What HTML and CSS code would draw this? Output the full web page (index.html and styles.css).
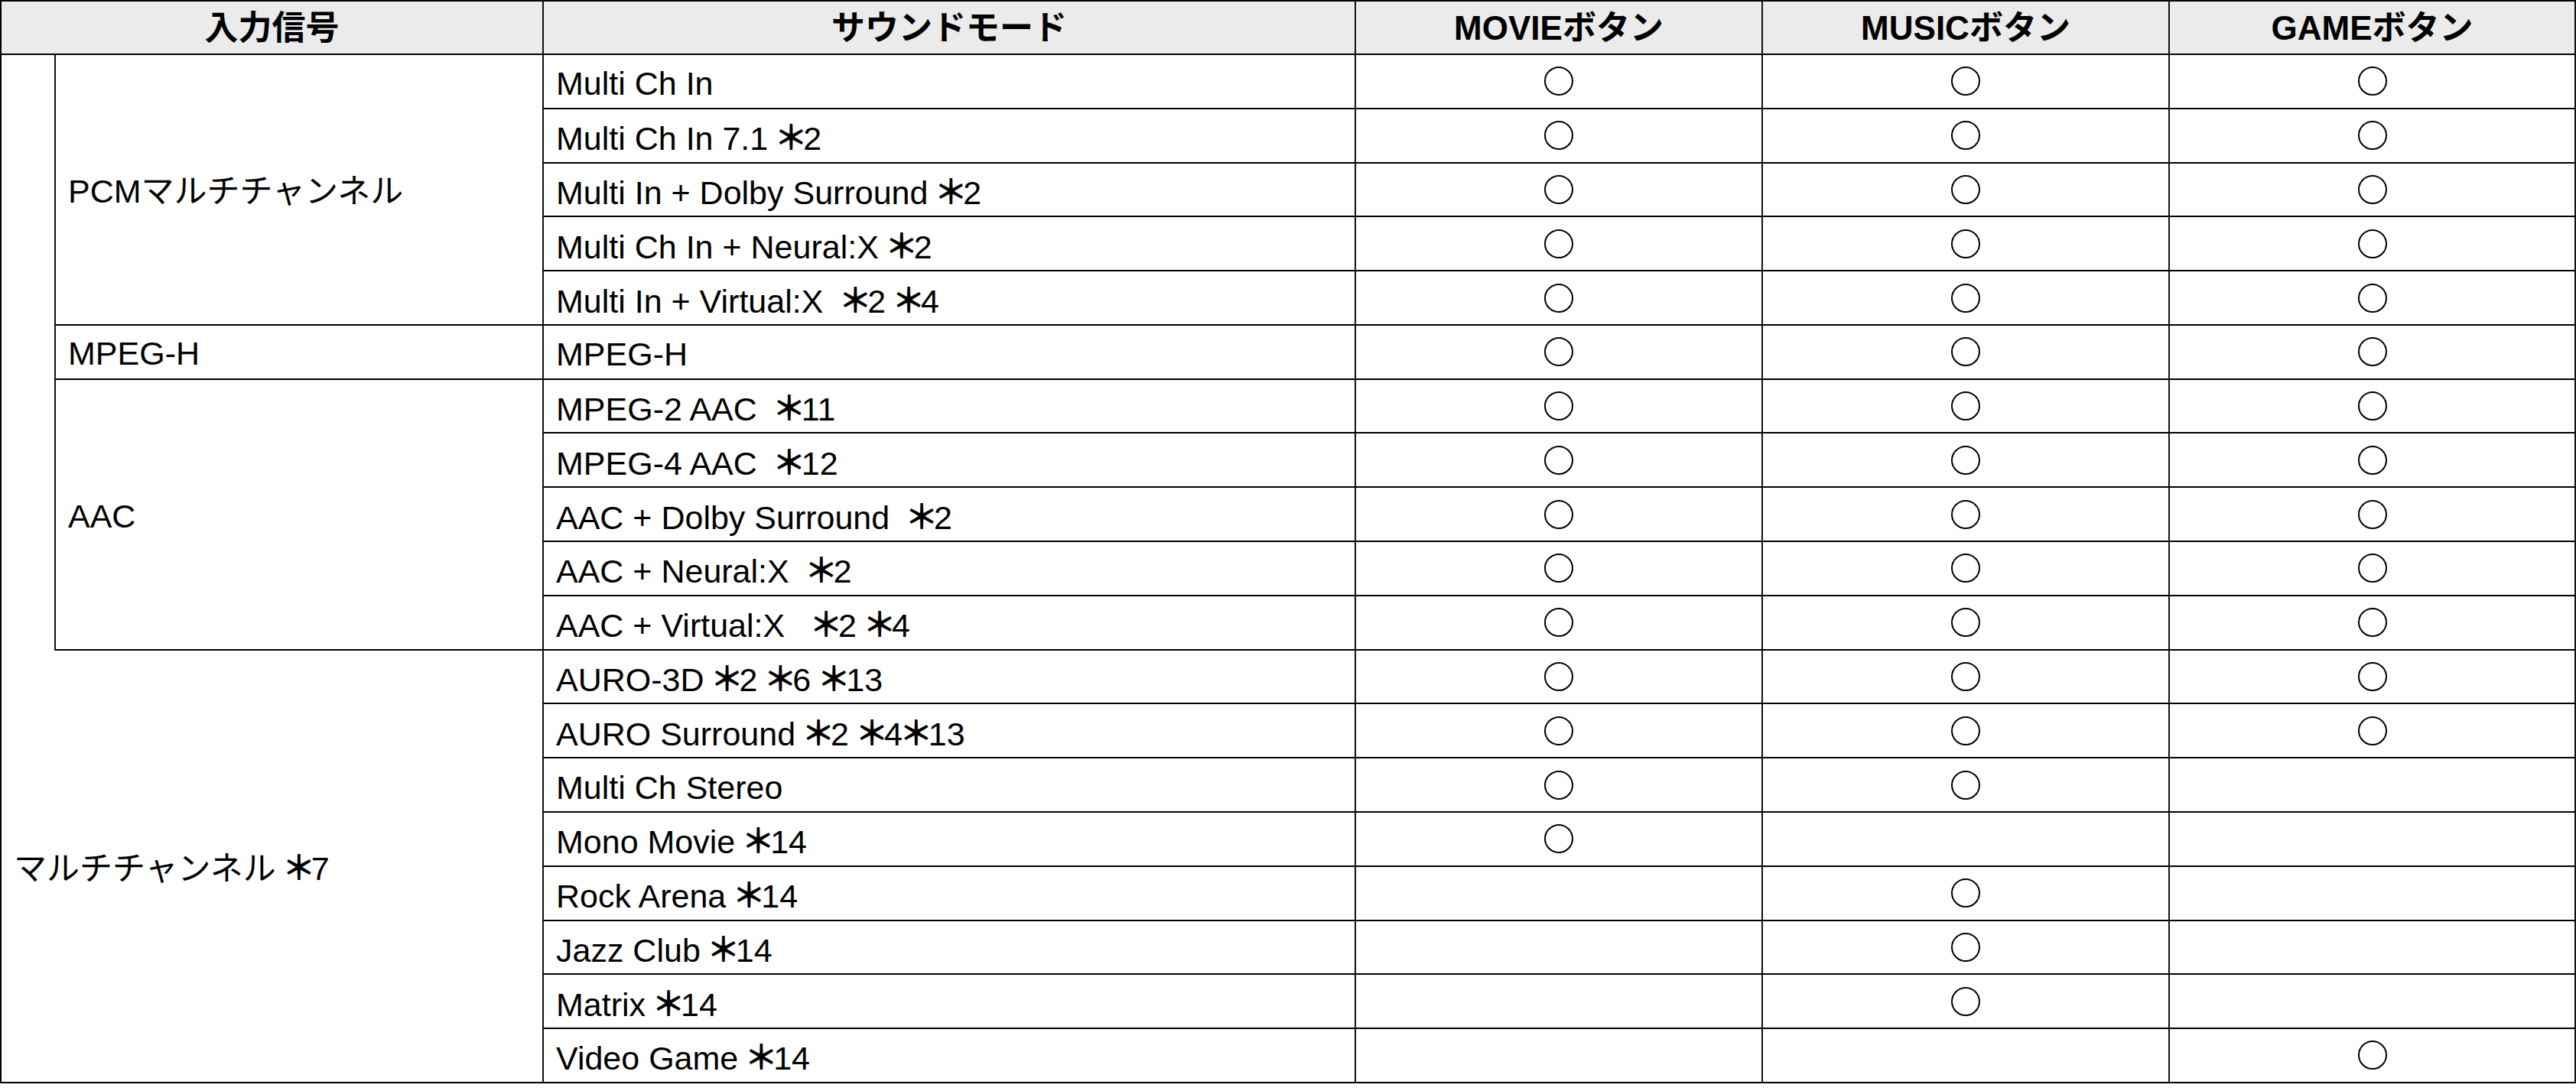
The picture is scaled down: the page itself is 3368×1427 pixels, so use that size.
FILE: index.html
```html
<!DOCTYPE html>
<html lang="ja">
<head>
<meta charset="utf-8">
<title>サウンドモード</title>
<link rel="stylesheet" href="styles.css">
</head>
<body>
<div class="tbl">
  <div class="c h hspan"><span>入力信号</span></div>
  <div class="c h"><span>サウンドモード</span></div>
  <div class="c h"><span>MOVIEボタン</span></div>
  <div class="c h"><span>MUSICボタン</span></div>
  <div class="c h"><span>GAMEボタン</span></div>

  <div class="c rail"></div>
  <div class="c grp grp5"><span>PCMマルチチャンネル</span></div>
  <div class="c mode"><span>Multi Ch In</span></div>
  <div class="c mk"><span class="o"></span></div>
  <div class="c mk"><span class="o"></span></div>
  <div class="c mk"><span class="o"></span></div>

  <div class="c mode"><span>Multi Ch In 7.1 <span class="ast">＊</span>2</span></div>
  <div class="c mk"><span class="o"></span></div>
  <div class="c mk"><span class="o"></span></div>
  <div class="c mk"><span class="o"></span></div>

  <div class="c mode"><span>Multi In + Dolby Surround <span class="ast">＊</span>2</span></div>
  <div class="c mk"><span class="o"></span></div>
  <div class="c mk"><span class="o"></span></div>
  <div class="c mk"><span class="o"></span></div>

  <div class="c mode"><span>Multi Ch In + Neural:X <span class="ast">＊</span>2</span></div>
  <div class="c mk"><span class="o"></span></div>
  <div class="c mk"><span class="o"></span></div>
  <div class="c mk"><span class="o"></span></div>

  <div class="c mode"><span>Multi In + Virtual:X&nbsp; <span class="ast">＊</span>2 <span class="ast">＊</span>4</span></div>
  <div class="c mk"><span class="o"></span></div>
  <div class="c mk"><span class="o"></span></div>
  <div class="c mk"><span class="o"></span></div>

  <div class="c grp"><span>MPEG-H</span></div>
  <div class="c mode"><span>MPEG-H</span></div>
  <div class="c mk"><span class="o"></span></div>
  <div class="c mk"><span class="o"></span></div>
  <div class="c mk"><span class="o"></span></div>

  <div class="c grp grp5"><span>AAC</span></div>
  <div class="c mode"><span>MPEG-2 AAC&nbsp; <span class="ast">＊</span>11</span></div>
  <div class="c mk"><span class="o"></span></div>
  <div class="c mk"><span class="o"></span></div>
  <div class="c mk"><span class="o"></span></div>

  <div class="c mode"><span>MPEG-4 AAC&nbsp; <span class="ast">＊</span>12</span></div>
  <div class="c mk"><span class="o"></span></div>
  <div class="c mk"><span class="o"></span></div>
  <div class="c mk"><span class="o"></span></div>

  <div class="c mode"><span>AAC + Dolby Surround&nbsp; <span class="ast">＊</span>2</span></div>
  <div class="c mk"><span class="o"></span></div>
  <div class="c mk"><span class="o"></span></div>
  <div class="c mk"><span class="o"></span></div>

  <div class="c mode"><span>AAC + Neural:X&nbsp; <span class="ast">＊</span>2</span></div>
  <div class="c mk"><span class="o"></span></div>
  <div class="c mk"><span class="o"></span></div>
  <div class="c mk"><span class="o"></span></div>

  <div class="c mode"><span>AAC + Virtual:X&nbsp;&nbsp; <span class="ast">＊</span>2 <span class="ast">＊</span>4</span></div>
  <div class="c mk"><span class="o"></span></div>
  <div class="c mk"><span class="o"></span></div>
  <div class="c mk"><span class="o"></span></div>

  <div class="c grp big"><span>マルチチャンネル <span class="ast">＊</span>7</span></div>
  <div class="c mode"><span>AURO-3D <span class="ast">＊</span>2 <span class="ast">＊</span>6 <span class="ast">＊</span>13</span></div>
  <div class="c mk"><span class="o"></span></div>
  <div class="c mk"><span class="o"></span></div>
  <div class="c mk"><span class="o"></span></div>

  <div class="c mode"><span>AURO Surround <span class="ast">＊</span>2 <span class="ast">＊</span>4<span class="ast">＊</span>13</span></div>
  <div class="c mk"><span class="o"></span></div>
  <div class="c mk"><span class="o"></span></div>
  <div class="c mk"><span class="o"></span></div>

  <div class="c mode"><span>Multi Ch Stereo</span></div>
  <div class="c mk"><span class="o"></span></div>
  <div class="c mk"><span class="o"></span></div>
  <div class="c mk"></div>

  <div class="c mode"><span>Mono Movie <span class="ast">＊</span>14</span></div>
  <div class="c mk"><span class="o"></span></div>
  <div class="c mk"></div>
  <div class="c mk"></div>

  <div class="c mode"><span>Rock Arena <span class="ast">＊</span>14</span></div>
  <div class="c mk"></div>
  <div class="c mk"><span class="o"></span></div>
  <div class="c mk"></div>

  <div class="c mode"><span>Jazz Club <span class="ast">＊</span>14</span></div>
  <div class="c mk"></div>
  <div class="c mk"><span class="o"></span></div>
  <div class="c mk"></div>

  <div class="c mode"><span>Matrix <span class="ast">＊</span>14</span></div>
  <div class="c mk"></div>
  <div class="c mk"><span class="o"></span></div>
  <div class="c mk"></div>

  <div class="c mode"><span>Video Game <span class="ast">＊</span>14</span></div>
  <div class="c mk"></div>
  <div class="c mk"></div>
  <div class="c mk"><span class="o"></span></div>
</div>
</body>
</html>
```

FILE: styles.css
```css
html, body {
  margin: 0;
  padding: 0;
  background: #ffffff;
}

.tbl {
  box-sizing: border-box;
  width: 3368px;
  display: grid;
  grid-template-columns: 71px 638px 1062px 532px 532px 531px;
  grid-template-rows: 70px repeat(19, 70.79px);
  border-top: 2px solid #000;
  border-left: 2px solid #000;
  font-family: "Liberation Sans", "Noto Sans CJK JP", sans-serif;
  font-size: 43px;
  color: #000;
}

.c {
  box-sizing: border-box;
  border-right: 2px solid #111;
  border-bottom: 2px solid #000;
  display: flex;
  align-items: center;
  padding-left: 16px;
  padding-top: 6px;
  white-space: nowrap;
  min-width: 0;
  line-height: 48px;
}

.h {
  background: #ebebeb;
  justify-content: center;
  padding-left: 0;
  padding-top: 2px;
  font-size: 44px;
  font-weight: 700;
}

.hspan {
  grid-column: span 2;
}

.rail {
  grid-row: span 11;
  border-bottom: none;
  padding: 0;
}

.grp {
  padding-top: 4px;
}

.grp5 {
  grid-row: span 5;
}

.big {
  grid-column: span 2;
  grid-row: span 8;
}

.mk {
  justify-content: center;
  padding-left: 0;
  padding-top: 0;
}

.o {
  display: block;
  box-sizing: border-box;
  width: 38px;
  height: 38px;
  border: 2px solid #000;
  border-radius: 50%;
}

.ast {
  font-family: "Noto Sans CJK JP", sans-serif;
  font-size: 44px;
  font-weight: 700;
  line-height: 1;
  margin-left: -4px;
  margin-right: -6px;
}
```
